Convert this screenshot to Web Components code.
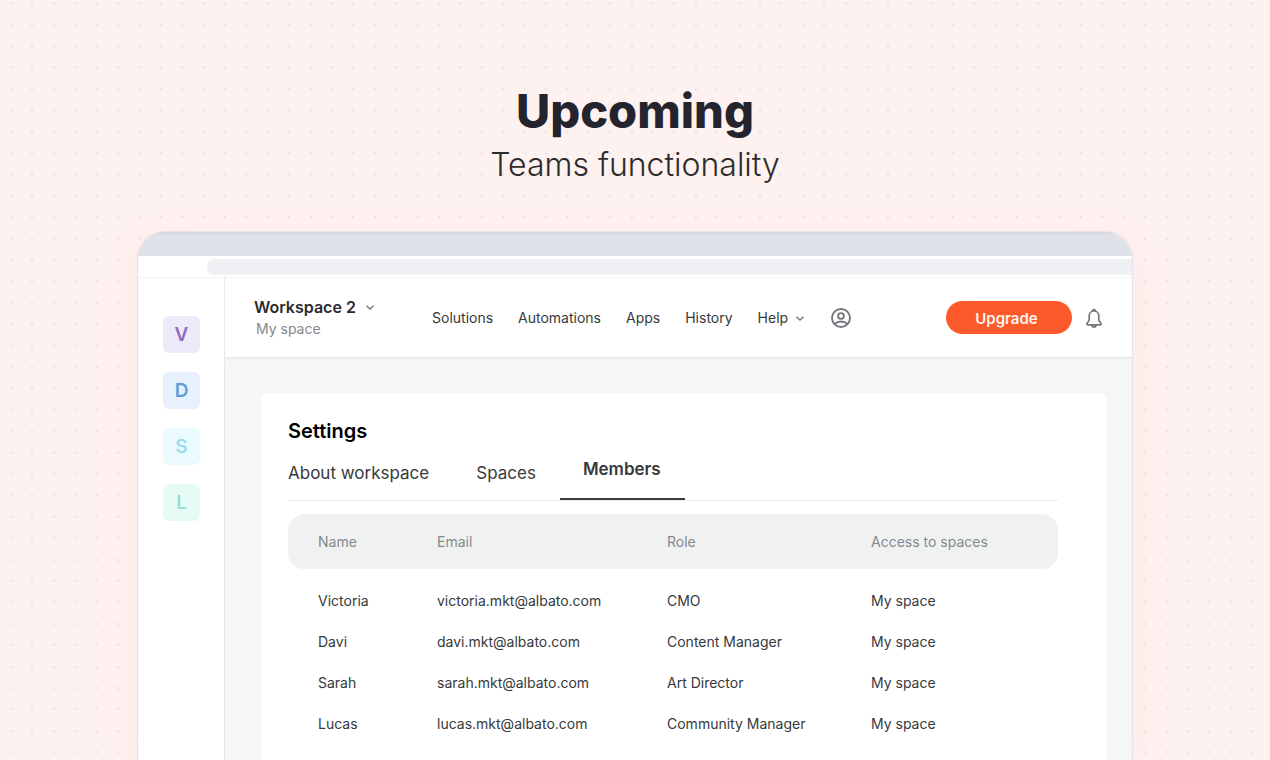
<!DOCTYPE html>
<html lang="en">
<head>
<meta charset="utf-8">
<meta name="viewport" content="width=device-width, initial-scale=1">
<title>Teams functionality</title>
<style>
body {
  margin: 0;
  font-family: Inter, "Liberation Sans", sans-serif;
  color: #37393b;
}
</style>
</head>
<body>
<promo-page>
  <span slot="title">Upcoming</span>
  <span slot="subtitle">Teams functionality</span>
  <browser-window>
    <space-rail slot="side"></space-rail>
    <app-header slot="header" workspace="Workspace 2" space="My space"></app-header>
    <settings-card>
      <span slot="title">Settings</span>
      <tab-list slot="tabs"></tab-list>
      <members-table></members-table>
    </settings-card>
  </browser-window>
</promo-page>

<script>
// shared helper: attaches the shadow root and fills it with the markup
class BaseElement extends HTMLElement{
    constructor(markup){
        super();
        const template = document.createElement('template');
        template.innerHTML = markup;
        this.attachShadow({mode:'open'});
        this.shadowRoot.appendChild(template.content.cloneNode(true));
    }
}

/* ---------- page with the dotted background ---------- */
class PromoPage extends BaseElement{
    constructor(){
        super(`
<style>
:host {
  display: flex;
  flex-direction: column;
  position: relative;
  min-height: 100vh;
  box-sizing: border-box;
  padding: 81px 137px 0;
  background: #fef2f0;
}
.dots {
  position: absolute;
  inset: 0;
  width: 100%;
  height: 100%;
}
header {
  position: relative;
  text-align: center;
  margin-bottom: 42px;
}
h1, p {
  margin: 0;
}
h1 {
  font-size: 47px;
  line-height: 60px;
  font-weight: 800;
  color: #24242e;
}
p {
  font-size: 32px;
  line-height: 48px;
  font-weight: 300;
  color: #2c2b2b;
}
main {
  position: relative;
  flex: 1;
  display: flex;
}
</style>
<svg class="dots" aria-hidden="true">
  <defs>
    <pattern id="grid" width="107" height="107" patternUnits="userSpaceOnUse">
      <path id="row" d="M11 3h0M32 3h0M54 3h0M75 3h0M97 3h0" stroke="#f2e4e3" stroke-width="3" stroke-linecap="round"/>
      <use href="#row" y="22"/>
      <use href="#row" y="43"/>
      <use href="#row" y="64"/>
      <use href="#row" y="86"/>
    </pattern>
  </defs>
  <rect width="100%" height="100%" fill="url(#grid)"/>
</svg>
<header>
  <h1><slot name="title"></slot></h1>
  <p><slot name="subtitle"></slot></p>
</header>
<main><slot></slot></main>
`);
    }
}

/* ---------- browser frame ---------- */
class BrowserWindow extends BaseElement{
    constructor(){
        super(`
<style>
:host {
  flex: 1;
  display: flex;
  flex-direction: column;
  overflow: hidden;
  box-sizing: border-box;
  border: 1px solid #e4e3e8;
  border-bottom: 0;
  border-radius: 28px 28px 0 0;
  background: #fff;
  box-shadow: 0 8px 32px rgba(255, 190, 185, .2);
}
.titlebar {
  height: 24px;
  background: #dfe2e9;
  box-shadow: inset 0 2px 1px #d5d7e0;
}
.toolbar {
  padding: 3px 0 2px 69px;
  border-bottom: 1px solid #f3f3f4;
}
.address {
  height: 16px;
  border-radius: 8px 0 0 8px;
  background: #eff0f3;
}
.body {
  flex: 1;
  display: flex;
}
.content {
  flex: 1;
  display: flex;
  flex-direction: column;
  min-width: 0;
  background: #f4f6f8;
}
.panel {
  flex: 1;
  display: flex;
  padding: 35px 26px 0 36px;
}
</style>
<div class="titlebar"></div>
<div class="toolbar"><div class="address"></div></div>
<div class="body">
  <slot name="side"></slot>
  <div class="content">
    <slot name="header"></slot>
    <div class="panel"><slot></slot></div>
  </div>
</div>
`);
    }
}

/* ---------- left rail, one button per workspace ---------- */
class SpaceRail extends BaseElement{
    constructor(){
        super(`
<style>
:host {
  display: block;
  border-right: 1px solid #e6e8ea;
  padding: 38px 24px 0 25px;
}
nav {
  display: flex;
  flex-direction: column;
  gap: 19px;
}
button {
  width: 37px;
  height: 37px;
  border: 0;
  border-radius: 6px;
  padding: 0;
  font: 600 19px/24px Inter, "Liberation Sans", sans-serif;
}
.v { background: #ecebfa; color: #936cbd; }
.d { background: #e8effd; color: #5e9fdb; }
.s { background: #ebfafe; color: #9bdcee; }
.l { background: #e6fbf6; color: #9adfcb; }
</style>
<nav aria-label="Workspaces">
  <button class="v">V</button>
  <button class="d">D</button>
  <button class="s">S</button>
  <button class="l">L</button>
</nav>
`);
    }
}

/* ---------- top bar of the app ---------- */
class AppHeader extends BaseElement{
    constructor(){
        super(`
<style>
:host {
  display: flex;
  align-items: center;
  height: 79px;
  padding: 0 28px 0 29px;
  background: #fff;
  border-bottom: 1px solid #e3e6e9;
  box-shadow: 0 1px 2px #eceff1;
}
button {
  border: 0;
  padding: 0;
  background: none;
  font: inherit;
  color: inherit;
}
svg {
  display: block;
  fill: none;
  stroke: #74777c;
}
.workspace {
  width: 178px;
  text-align: left;
}
.name {
  display: flex;
  align-items: center;
  gap: 9px;
  font-size: 16px;
  line-height: 22px;
  font-weight: 600;
  color: #2a2b2d;
}
.space {
  display: block;
  padding-left: 2px;
  font-size: 14px;
  line-height: 22px;
  color: #85888c;
}
nav {
  flex: 1;
  display: flex;
  align-items: center;
  gap: 25px;
  font-size: 14px;
  line-height: 22px;
}
a {
  color: inherit;
  text-decoration: none;
}
.help {
  display: flex;
  align-items: center;
  gap: 7px;
}
.upgrade {
  width: 126px;
  height: 33px;
  border-radius: 17px;
  margin-right: 12px;
  padding: 1px 5px 0 0;
  background: #fd5a2c;
  color: #fff3ec;
  font-size: 15px;
  font-weight: 600;
}
</style>
<button class="workspace">
  <span class="name"><span id="workspace"></span>
    <svg width="10" height="10" viewBox="0 0 10 10" stroke-width="1.5"><path d="M1.500 3.800 5 7l3.500-3.200"/></svg>
  </span>
  <span class="space" id="space"></span>
</button>
<nav>
  <a href="#solutions">Solutions</a>
  <a href="#automations">Automations</a>
  <a href="#apps">Apps</a>
  <a href="#history">History</a>
  <a class="help" href="#help">Help
    <svg width="10" height="10" viewBox="0 0 10 10" stroke-width="1.5"><path d="M1.500 3.800 5 7l3.500-3.200"/></svg>
  </a>
  <button class="profile" aria-label="Profile">
    <svg width="22" height="22" viewBox="0 0 22 22" stroke-width="1.900">
      <circle cx="11" cy="11" r="9"/>
      <circle cx="11" cy="9" r="2.900"/>
      <path d="M4.600 17.200c1.700-1.800 3.900-2.700 6.400-2.700s4.700.9 6.400 2.700"/>
    </svg>
  </button>
</nav>
<button class="upgrade">Upgrade</button>
<button aria-label="Notifications">
  <svg width="20" height="22" viewBox="0 0 20 22" stroke-width="1.700" stroke-linejoin="round">
    <path d="M10 4c-3 0-4.800 2.200-4.800 5v3.700c0 1.500-2.300 3-2.300 4.300 0 .5.400.8.900.8h12.400c.5 0 .9-.3.900-.8 0-1.300-2.300-2.800-2.300-4.300V9c0-2.800-1.800-5-4.800-5z"/>
    <path d="M8.600 4a1.400 1.400 0 0 1 2.800 0M8 18a2 2 0 0 0 4 0"/>
  </svg>
</button>
`);
    }

    connectedCallback(){
        this.shadowRoot.querySelector('#workspace').textContent = this.getAttribute('workspace');
        this.shadowRoot.querySelector('#space').textContent = this.getAttribute('space');
    }
}

/* ---------- white card ---------- */
class SettingsCard extends BaseElement{
    constructor(){
        super(`
<style>
:host {
  flex: 1;
  display: block;
  min-width: 0;
  padding: 24px 48px 0 27px;
  border-radius: 6px 6px 0 0;
  background: #fff;
}
h2 {
  margin: 0;
  font-size: 20px;
  line-height: 28px;
  font-weight: 600;
  color: #000;
}
</style>
<h2><slot name="title"></slot></h2>
<slot name="tabs"></slot>
<slot></slot>
`);
    }
}

/* ---------- tabs ---------- */
class TabList extends BaseElement{
    constructor(){
        super(`
<style>
:host {
  display: block;
  margin-bottom: 13px;
  border-bottom: 1px solid #e9ebec;
}
div {
  display: flex;
  align-items: flex-end;
}
button {
  height: 55px;
  border: 0;
  border-bottom: 2px solid transparent;
  padding: 2px 24px 0 23px;
  background: none;
  font: inherit;
  font-size: 17px;
  line-height: 24px;
  color: inherit;
}
button:first-child {
  padding-left: 0;
}
button[aria-selected="true"] {
  border-bottom-color: #3a3b3e;
  padding-bottom: 8px;
  font-weight: 600;
}
</style>
<div role="tablist">
  <button role="tab" aria-selected="false">About workspace</button>
  <button role="tab" aria-selected="false">Spaces</button>
  <button role="tab" aria-selected="true">Members</button>
</div>
`);
    }

    connectedCallback(){
        const tabs = this.shadowRoot.querySelectorAll('button');
        tabs.forEach(tab => tab.addEventListener('click', () => {
            tabs.forEach(t => t.setAttribute('aria-selected', t === tab));
        }));
    }
}

/* ---------- members ---------- */
class MembersTable extends BaseElement{
    constructor(){
        super(`
<style>
:host {
  display: block;
}
table {
  width: 100%;
  table-layout: fixed;
  border-collapse: separate;
  border-spacing: 0;
  font-size: 14px;
  line-height: 22px;
}
th, td {
  padding: 0;
  text-align: left;
}
th {
  height: 55px;
  background: #f0f2f2;
  font-weight: 400;
  color: #85888c;
}
td {
  height: 41px;
}
th:first-child, td:first-child {
  padding-left: 30px;
}
th:first-child {
  border-radius: 16px 0 0 16px;
}
th:last-child {
  border-radius: 0 16px 16px 0;
}
.name { width: 119px; }
.email { width: 230px; }
.role { width: 204px; }
tbody::before {
  content: "";
  display: block;
  height: 11px;
}
</style>
<table>
  <thead>
    <tr><th class="name">Name</th><th class="email">Email</th><th class="role">Role</th><th>Access to spaces</th></tr>
  </thead>
  <tbody></tbody>
</table>
`);
        this._data = [
            ['Victoria', 'victoria.mkt@albato.com', 'CMO', 'My space'],
            ['Davi', 'davi.mkt@albato.com', 'Content Manager', 'My space'],
            ['Sarah', 'sarah.mkt@albato.com', 'Art Director', 'My space'],
            ['Lucas', 'lucas.mkt@albato.com', 'Community Manager', 'My space']
        ];
    }

    connectedCallback(){
        const body = this.shadowRoot.querySelector('tbody');
        body.replaceChildren();
        for(const member of this._data){
            const row = body.insertRow();
            member.forEach(value => row.insertCell().textContent = value);
        }
    }
}

customElements.define('promo-page', PromoPage);
customElements.define('browser-window', BrowserWindow);
customElements.define('space-rail', SpaceRail);
customElements.define('app-header', AppHeader);
customElements.define('settings-card', SettingsCard);
customElements.define('tab-list', TabList);
customElements.define('members-table', MembersTable);
</script>
</body>
</html>
